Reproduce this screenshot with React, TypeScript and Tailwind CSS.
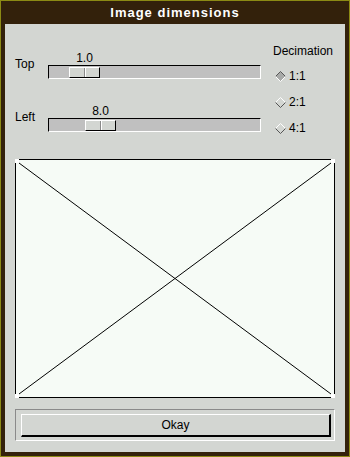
const font = { fontFamily: '"Liberation Sans", Arial, sans-serif' };

function Slider({ label, value, offset }: { label: string; value: string; offset: number }) {
  return (
    <div className="flex">
      <div className="w-[33px] pt-[6px] text-[12px] leading-[13px] text-black">{label}</div>
      <div className="flex flex-col">
        <div className="h-[13px] text-[12px] leading-[13px] text-black">
          <div className="w-[31px] text-center" style={{ marginLeft: offset }}>
            {value}
          </div>
        </div>
        <div className="w-[213px] h-[14px] bg-[#c0c0c0] border-t border-l border-t-black border-l-black border-b border-r border-b-white border-r-white pt-[1px]">
          <div
            className="w-[31px] h-[11px] bg-[#d3d6d2] border-t border-l border-white border-b border-r border-b-black border-r-black flex justify-center"
            style={{ marginLeft: offset - 1 }}
          >
            <div className="w-[1px] h-full bg-[#8a8a8a]" />
            <div className="w-[1px] h-full bg-white" />
          </div>
        </div>
      </div>
    </div>
  );
}

function Diamond({ on }: { on?: boolean }) {
  return (
    <svg width="11" height="11" viewBox="0 0 11 11" className="shrink-0">
      <polygon points="5.5,0.5 10.5,5.5 5.5,10.5 0.5,5.5" fill={on ? '#a8aaa8' : '#d3d6d2'} />
      <polyline points="0.5,5.5 5.5,0.5 10.5,5.5" fill="none" stroke={on ? '#555' : '#fff'} strokeWidth="1" />
      <polyline points="0.5,5.5 5.5,10.5 10.5,5.5" fill="none" stroke={on ? '#fff' : '#555'} strokeWidth="1" />
    </svg>
  );
}

export default function App() {
  const options = [
    { label: '1:1', on: true },
    { label: '2:1', on: false },
    { label: '4:1', on: false },
  ];

  return (
    <div
      className="w-[350px] h-[457px] bg-[#33210b] border border-[#8c8a14] flex flex-col px-[4px] pb-[4px]"
      style={font}
    >
      <div className="h-[23px] flex items-center justify-center text-white font-bold text-[13px] tracking-[1px] pt-[1px]">
        Image dimensions
      </div>
      <div className="flex-1 bg-[#d3d6d2] flex flex-col px-[10px] pt-[21px] text-[12px] leading-[13px] text-black">
        <div className="flex">
          <div className="w-[246px] flex flex-col gap-[26px] pt-[7px]">
            <Slider label="Top" value="1.0" offset={21} />
            <Slider label="Left" value="8.0" offset={37} />
          </div>
          <div className="ml-[12px] flex flex-col">
            <div className="h-[13px]">Decimation</div>
            <div className="mt-[5px] flex flex-col">
              {options.map((o) => (
                <div key={o.label} className="h-[26px] flex items-center gap-[3px] pl-[2px]">
                  <Diamond on={o.on} />
                  <span>{o.label}</span>
                </div>
              ))}
            </div>
          </div>
        </div>

        <div className="mt-[18px] h-[239px] bg-[#f6fbf6] border border-black relative">
          <svg
            className="absolute inset-0 w-full h-full"
            viewBox="0 0 318 237"
            preserveAspectRatio="none"
          >
            <line x1="3" y1="3" x2="315" y2="234" stroke="black" strokeWidth="1" />
            <line x1="315" y1="3" x2="3" y2="234" stroke="black" strokeWidth="1" />
          </svg>
          <div className="absolute -left-[1px] -top-[1px] w-[4px] h-[4px] bg-white" />
          <div className="absolute -right-[1px] -top-[1px] w-[4px] h-[4px] bg-white" />
          <div className="absolute -left-[1px] -bottom-[1px] w-[4px] h-[4px] bg-white" />
          <div className="absolute -right-[1px] -bottom-[1px] w-[4px] h-[4px] bg-white" />
        </div>

        <div className="mt-[11px] h-[32px] border-t border-l border-[#8a8a8a] border-b border-r border-b-white border-r-white pl-[5px] pr-[3px] pt-[4px] pb-[3px]">
          <div className="h-[23px] border-t border-l border-white border-b-2 border-r-2 border-b-black border-r-black flex items-center justify-center">
            Okay
          </div>
        </div>
      </div>
    </div>
  );
}
